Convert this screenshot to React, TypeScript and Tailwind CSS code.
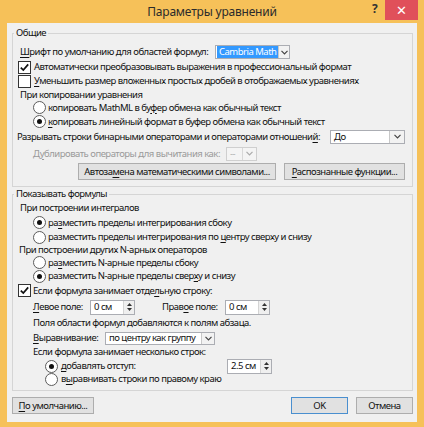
import React from "react";

function U({ children }: { children: React.ReactNode }) {
  return <span className="underline decoration-[1px] underline-offset-[2px]">{children}</span>;
}

function Checkbox({ checked }: { checked?: boolean }) {
  return (
    <span className="flex h-[13px] w-[13px] shrink-0 items-center justify-center border border-[#333333] bg-white">
      {checked && (
        <svg width="11" height="11" viewBox="0 0 11 11">
          <path d="M1.8 5.6 L4.3 8.1 L9.2 2.4" fill="none" stroke="#111111" strokeWidth="1.7" />
        </svg>
      )}
    </span>
  );
}

function Radio({ checked }: { checked?: boolean }) {
  return (
    <span className="flex h-[13px] w-[13px] shrink-0 items-center justify-center rounded-full border border-[#5c5c5c] bg-white">
      {checked && <span className="h-[5px] w-[5px] rounded-full bg-[#111111]" />}
    </span>
  );
}

function Chevron({ color = "#444444" }: { color?: string }) {
  return (
    <svg width="7" height="5" viewBox="0 0 7 5">
      <path d="M0.5 0.8 L3.5 3.8 L6.5 0.8" fill="none" stroke={color} strokeWidth="1.2" />
    </svg>
  );
}

function Spin({ value }: { value: string }) {
  return (
    <span className="flex h-[15px] w-[45px] shrink-0 border border-[#abadb3] bg-white">
      <span className="flex flex-1 items-center whitespace-nowrap pl-[3px]">{value}</span>
      <span className="flex w-[11px] flex-col items-center justify-center gap-[2px] border-l border-[#d4d4d4] bg-[#efefef]">
        <svg width="5" height="3" viewBox="0 0 5 3">
          <path d="M0 3 L2.5 0 L5 3 Z" fill="#333333" />
        </svg>
        <svg width="5" height="3" viewBox="0 0 5 3">
          <path d="M0 0 L2.5 3 L5 0 Z" fill="#333333" />
        </svg>
      </span>
    </span>
  );
}

function Btn({ children, className = "" }: { children: React.ReactNode; className?: string }) {
  return (
    <div
      className={`flex h-[17px] shrink-0 items-center justify-center whitespace-nowrap border bg-[#e1e1e1] text-[#111111] ${className}`}
    >
      {children}
    </div>
  );
}

export default function App() {
  return (
    <div className="flex h-[427px] w-[424px] flex-col whitespace-nowrap bg-[#f6c159] font-['Noto_Sans',sans-serif] text-[9.5px] leading-[14px] tracking-[-0.5px] text-[#111111]">
      {/* title bar */}
      <div className="flex h-[23px] shrink-0">
        <div className="flex flex-1 items-center justify-center pl-[60px] text-[12px] tracking-[-0.2px] text-[#2b2b2b]">
          Параметры уравнений
        </div>
        <div className="flex w-[21px] items-start justify-center pt-[2px] text-[12px] font-bold text-[#333333]">?</div>
        <div className="flex h-[20px] w-[33px] items-center justify-center bg-[#e0505a] text-[13px] text-white">
          ✕
        </div>
        <div className="w-[6px]" />
      </div>

      {/* client area */}
      <div className="mx-[7px] flex h-[399px] shrink-0 flex-col bg-[#f0f0f0] pl-[5px] pr-[4px]">
        {/* Group 1 */}
        <fieldset className="mt-[3px] flex flex-col border border-[#d5d5d5] pb-[6px]">
          <legend className="ml-[1px] px-[2px] leading-[14px]">Общие</legend>
          <div className="ml-[7px] mt-[4px] flex h-[16px] items-center">
            <span className="w-[195px] shrink-0">
              <U>Ш</U>рифт по умолчанию для областей формул:
            </span>
            <span className="flex h-[14px] w-[75px] items-center border border-[#abadb3] bg-white">
              <span className="ml-[1px] flex h-[12px] items-center bg-[#3399ff] px-[2px] text-white">
                Cambria Math
              </span>
              <span className="ml-auto flex h-[12px] w-[14px] items-center justify-center border-l border-[#c8c8c8] bg-[#f2f2f2]">
                <Chevron />
              </span>
            </span>
          </div>
          <div className="ml-[5px] flex h-[14px] items-center gap-[3px]">
            <Checkbox checked />
            <span>Автоматически преобразовывать выражения в профессиональный формат</span>
          </div>
          <div className="ml-[5px] flex h-[14px] items-center gap-[3px]">
            <Checkbox />
            <span>
              <U>У</U>меньшить размер вложенных простых дробей в отображаемых уравнениях
            </span>
          </div>
          <div className="ml-[7px] flex h-[13px] items-center">При копировании уравнения</div>
          <div className="ml-[20px] flex h-[13px] items-center gap-[2px]">
            <Radio />
            <span>
              копировать MathML в бу<U>ф</U>ер обмена как обычный текст
            </span>
          </div>
          <div className="ml-[20px] flex h-[15px] items-center gap-[2px]">
            <Radio checked />
            <span>
              <U>к</U>опировать линейный формат в буфер обмена как обычный текст
            </span>
          </div>
          <div className="ml-[4px] flex h-[15px] items-center">
            <span className="w-[313px] shrink-0">
              Разрывать строки бинарными операторами и операторами отношени<U>й</U>:
            </span>
            <span className="flex h-[14px] w-[75px] items-center border border-[#abadb3] bg-white">
              <span className="pl-[3px]">До</span>
              <span className="ml-auto flex h-[12px] w-[15px] items-center justify-center border-l border-[#c8c8c8] bg-[#f2f2f2]">
                <Chevron />
              </span>
            </span>
          </div>
          <div className="ml-[20px] mt-[2px] flex h-[15px] items-center text-[#9a9a9a]">
            <span className="w-[193px] shrink-0">
              Д<U>у</U>блировать операторы для вычитания как:
            </span>
            <span className="flex h-[14px] w-[31px] items-center border border-[#cfcfcf] bg-[#f4f4f4]">
              <span className="pl-[3px] text-[#b0b0b0]">--</span>
              <span className="ml-auto flex h-[12px] w-[14px] items-center justify-center border-l border-[#d8d8d8]">
                <Chevron color="#aaaaaa" />
              </span>
            </span>
          </div>
          <div className="ml-[65px] mt-[2px] flex gap-[8px]">
            <Btn className="w-[198px] border-[#adadad]">
              <span>
                Автоза<U>м</U>ена математическими символами...
              </span>
            </Btn>
            <Btn className="w-[121px] border-[#adadad]">
              <span>
                <U>Р</U>аспознанные функции...
              </span>
            </Btn>
          </div>
        </fieldset>

        {/* Group 2 */}
        <fieldset className="flex flex-col border border-[#d5d5d5] pb-[5px]">
          <legend className="ml-[1px] px-[2px] leading-[14px]">Показывать формулы</legend>
          <div className="ml-[7px] flex h-[14px] items-center">При построении интегралов</div>
          <div className="ml-[20px] flex h-[15px] items-center gap-[2px]">
            <Radio checked />
            <span>
              ра<U>з</U>местить пределы интегрирования сбоку
            </span>
          </div>
          <div className="ml-[20px] flex h-[14px] items-center gap-[2px]">
            <Radio />
            <span>
              разместить пределы интегрирования по <U>ц</U>ентру сверху и снизу
            </span>
          </div>
          <div className="ml-[6px] flex h-[12px] items-center">При построении других N-арных операторов</div>
          <div className="ml-[20px] flex h-[13px] items-center gap-[2px]">
            <Radio />
            <span>
              ра<U>з</U>местить N-арные пределы сбоку
            </span>
          </div>
          <div className="ml-[20px] flex h-[14px] items-center gap-[2px]">
            <Radio checked />
            <span>
              разместить N-арные пределы свер<U>х</U>у и снизу
            </span>
          </div>
          <div className="ml-[5px] flex h-[15px] items-center gap-[2px]">
            <Checkbox checked />
            <span>
              Если формула занимает отде<U>л</U>ьную строку:
            </span>
          </div>
          <div className="ml-[20px] mt-[1px] flex h-[16px] items-center">
            <span className="w-[57px] shrink-0">
              <U>Л</U>евое поле:
            </span>
            <Spin value="0 см" />
            <span className="ml-[27px] w-[63px] shrink-0">
              Прав<U>о</U>е поле:
            </span>
            <Spin value="0 см" />
          </div>
          <div className="ml-[20px] flex h-[16px] items-center">Поля области формул добавляются к полям абзаца.</div>
          <div className="ml-[20px] flex h-[14px] items-center">
            <span className="w-[72px] shrink-0">
              <U>В</U>ыравнивание:
            </span>
            <span className="flex h-[13px] w-[110px] items-center border border-[#abadb3] bg-white">
              <span className="pl-[3px]">по центру как группу</span>
              <span className="ml-auto flex h-[11px] w-[13px] items-center justify-center border-l border-[#c8c8c8] bg-[#f2f2f2]">
                <Chevron />
              </span>
            </span>
          </div>
          <div className="ml-[20px] flex h-[14px] items-center">Если формула занимает несколько строк:</div>
          <div className="ml-[32px] flex h-[14px] items-center gap-[3px]">
            <Radio checked />
            <span className="w-[163px] shrink-0">
              <U>д</U>обавлять отступ:
            </span>
            <Spin value="2.5 см" />
          </div>
          <div className="ml-[32px] flex h-[12px] items-center gap-[3px]">
            <Radio />
            <span>
              в<U>ы</U>равнивать строки по правому краю
            </span>
          </div>
        </fieldset>

        {/* bottom buttons */}
        <div className="mt-[6px] flex">
          <Btn className="w-[82px] border-[#adadad]">
            <span>
              <U>П</U>о умолчанию...
            </span>
          </Btn>
          <Btn className="ml-auto w-[57px] border-[#4a8fcf]">OK</Btn>
          <Btn className="ml-[8px] w-[57px] border-[#adadad]">Отмена</Btn>
        </div>
      </div>
    </div>
  );
}
